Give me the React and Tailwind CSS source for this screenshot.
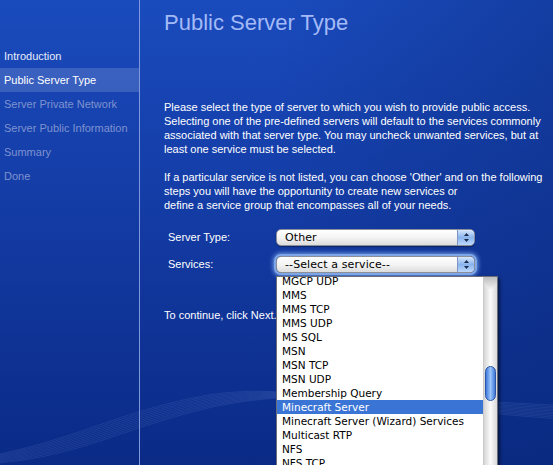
import React from 'react';

const steps = [
    { label: 'Introduction', state: 'done' },
    { label: 'Public Server Type', state: 'active' },
    { label: 'Server Private Network', state: 'todo' },
    { label: 'Server Public Information', state: 'todo' },
    { label: 'Summary', state: 'todo' },
    { label: 'Done', state: 'todo' },
];

const services = [
    'MGCP UDP',
    'MMS',
    'MMS TCP',
    'MMS UDP',
    'MS SQL',
    'MSN',
    'MSN TCP',
    'MSN UDP',
    'Membership Query',
    'Minecraft Server',
    'Minecraft Server (Wizard) Services',
    'Multicast RTP',
    'NFS',
    'NFS TCP',
];

const Stepper = () => (
    <svg width="7" height="11" viewBox="0 0 7 11" aria-hidden="true">
        <path d="M3.5 1 L6 4 L1 4 Z" fill="#1a2a4a" />
        <path d="M3.5 10 L6 7 L1 7 Z" fill="#1a2a4a" />
    </svg>
);

const MacSelect = ({ value, focused }) => (
    <div
        className={`relative w-[199px] h-[17px] rounded-[5px] border border-[#8a8f99] flex items-center
      bg-gradient-to-b from-[#ffffff] via-[#f4f4f4] to-[#dcdcdc]
      ${focused ? 'shadow-[0_0_0_2px_#7fa7e8,0_0_4px_3px_#6f9be3]' : 'shadow-[0_1px_1px_rgba(0,0,0,0.35)]'}`}
    >
        <span className="pl-[8px] text-[11px] leading-none text-black font-['DejaVu_Sans',sans-serif] tracking-[0.1px]">
            {value}
        </span>
        <div className="absolute right-0 top-0 bottom-0 w-[17px] rounded-r-[4px] border-l border-[#7d95c4] flex items-center justify-center bg-gradient-to-b from-[#d7e6fb] via-[#8ab4ee] to-[#bcd8fb]">
            <Stepper />
        </div>
    </div>
);

export default function App() {
    return (
        <div className="relative w-[553px] h-[465px] overflow-hidden flex bg-gradient-to-b from-[#1a4bbd] via-[#133aa2] to-[#0a2a86] font-['Liberation_Sans',sans-serif]">
            {/* darker right edge */}
            <div className="absolute inset-0 bg-gradient-to-r from-transparent via-transparent to-[#0a2a7a]/40 pointer-events-none" />

            {/* wave decoration */}
            <svg className="absolute left-0 bottom-0 pointer-events-none" width="553" height="140" viewBox="0 0 553 140" aria-hidden="true">
                {Array.from({ length: 10 }).map((_, i) => (
                    <path
                        key={i}
                        d={`M0 ${138 - i} C 80 ${130 - i * 2}, 120 ${105 - i * 2}, 200 ${85 - i * 1.5} S 360 ${70 + i}, 553 ${80 + i * 1.5}`}
                        stroke="#9fb4ee"
                        strokeOpacity={0.12}
                        fill="none"
                    />
                ))}
            </svg>

            {/* Sidebar */}
            <aside className="relative w-[140px] shrink-0 border-r border-[#7f97dd] pt-[44px]">
                {steps.map((s) => (
                    <div
                        key={s.label}
                        className={`h-[24px] pl-[4px] flex items-center text-[11px] whitespace-nowrap
              ${s.state === 'active' ? 'bg-white/15 text-white' : ''}
              ${s.state === 'done' ? 'text-[#e6ecfb]' : ''}
              ${s.state === 'todo' ? 'text-[#7f92cf]' : ''}`}
                    >
                        {s.label}
                    </div>
                ))}
            </aside>

            {/* Content */}
            <main className="relative flex-1 pl-[24px] pt-[10px] text-white">
                <h1 className="text-[22px] leading-[25px] text-[#a3baf7] font-['Liberation_Sans',sans-serif]">
                    Public Server Type
                </h1>

                <p className="mt-[65px] text-[11px] leading-[14px]">
                    Please select the type of server to which you wish to provide public access.
                    Selecting one of the pre-defined servers will default to the services commonly
                    associated with that server type. You may uncheck unwanted services, but at
                    least one service must be selected.
                </p>
                <p className="mt-[14px] text-[11px] leading-[14px]">
                    If a particular service is not listed, you can choose 'Other' and on the following
                    <br />
                    steps you will have the opportunity to create new services or
                    <br />
                    define a service group that encompasses all of your needs.
                </p>

                <div className="mt-[17px] pl-[4px] flex flex-col gap-[10px]">
                    <div className="flex items-center">
                        <span className="w-[108px] text-[11px]">Server Type:</span>
                        <MacSelect value="Other" />
                    </div>
                    <div className="flex items-start">
                        <span className="w-[108px] text-[11px]">Services:</span>
                        <MacSelect value="--Select a service--" focused />
                    </div>
                </div>

                <p className="mt-[35px] text-[11px] leading-[14px]">To continue, click Next.</p>
            </main>

            {/* Open dropdown list */}
            <div className="absolute left-[276px] top-[276px] w-[222px] h-[200px] bg-white border border-[#6a6f78] shadow-[2px_2px_3px_rgba(0,0,0,0.5)] overflow-hidden flex">
                <ul className="flex-1 -mt-[3px] font-['DejaVu_Sans',sans-serif] text-[10.5px] text-black">
                    {services.map((name) => (
                        <li
                            key={name}
                            className={`h-[14px] leading-[14px] pl-[5px] whitespace-nowrap
                ${name === 'Minecraft Server' ? 'bg-[#3a75d6] text-white' : ''}`}
                        >
                            {name}
                        </li>
                    ))}
                </ul>
                {/* scrollbar */}
                <div className="relative w-[14px] shrink-0 bg-gradient-to-r from-[#d6d6d6] via-[#fafafa] to-[#d9d9d9] border-l border-[#c8c8c8]">
                    <div className="absolute left-0 right-0 top-0 h-[12px] rounded-b-full bg-gradient-to-b from-[#bdbdbd] to-[#f0f0f0]" />
                    <div className="absolute left-[1px] right-[1px] top-[89px] h-[35px] rounded-full border border-[#2a56a8] bg-gradient-to-r from-[#3f78d8] via-[#9cc6fb] to-[#3f78d8]" />
                </div>
            </div>
        </div>
    );
}
